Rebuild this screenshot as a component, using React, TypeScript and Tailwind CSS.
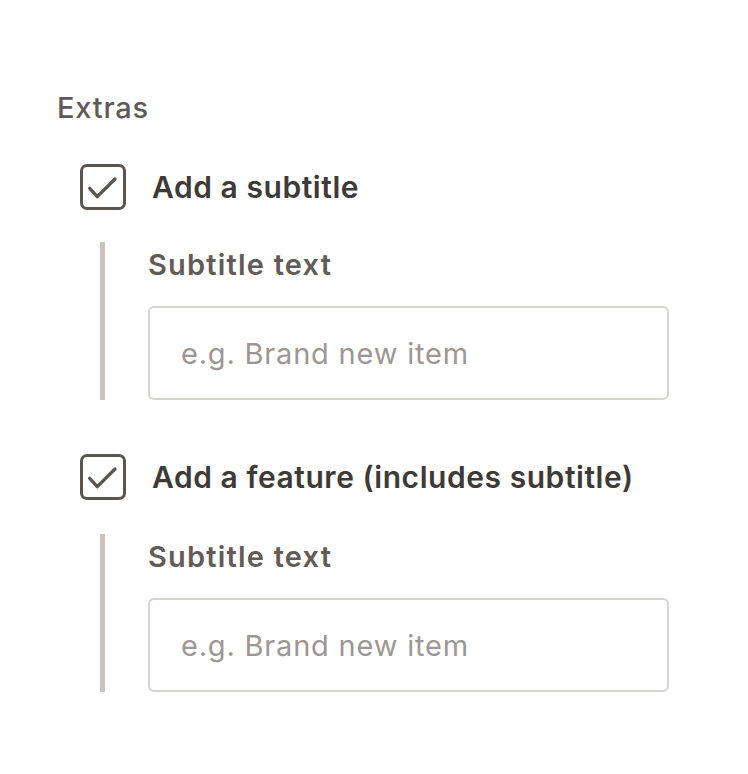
import React from "react";

function CheckBox() {
  return (
    <div className="w-[46px] h-[46px] shrink-0 rounded-[7px] border-[3px] border-[#5b5552] bg-white">
      <svg width="40" height="40" viewBox="0 0 40 40" fill="none">
        <path
          d="M6.7 21.3 L14.3 29.7 L32 12"
          stroke="#5b5552"
          strokeWidth="3.3"
          strokeLinecap="round"
          strokeLinejoin="round"
        />
      </svg>
    </div>
  );
}

function OptionRow({ label, className }: { label: string; className: string }) {
  return (
    <label className={`flex items-center gap-[26px] ml-[23px] ${className}`}>
      <CheckBox />
      <span className="text-[30px] leading-[36px] tracking-[0.55px] font-semibold text-[#3e3a37]">{label}</span>
    </label>
  );
}

function SubtitleField({ className }: { className: string }) {
  return (
    <div className={`ml-[43px] border-l-[5px] border-[#c9c4bf] pl-[43px] pt-[5px] ${className}`}>
      <div className="text-[29px] leading-[36px] tracking-[1.2px] font-semibold text-[#625c59] mb-[23px]">
        Subtitle text
      </div>
      <input
        type="text"
        placeholder="e.g. Brand new item"
        className="block w-[521px] h-[94px] rounded-[6px] border-2 border-[#d7d4d1] bg-white pl-[31px] text-[29px] tracking-[0.8px] text-[#3e3a37] placeholder:text-[#9c9794] outline-none"
      />
    </div>
  );
}

export default function App() {
  return (
    <div className="w-[748px] h-[774px] bg-white pl-[57px] pt-[90px] font-[family-name:Inter,sans-serif]">
      <div className="text-[29px] leading-[36px] tracking-[0.8px] font-medium text-[#5f5a57]">Extras</div>
      <OptionRow label="Add a subtitle" className="mt-[38px]" />
      <SubtitleField className="mt-[32px]" />
      <OptionRow label="Add a feature (includes subtitle)" className="mt-[54px]" />
      <SubtitleField className="mt-[34px]" />
    </div>
  );
}
